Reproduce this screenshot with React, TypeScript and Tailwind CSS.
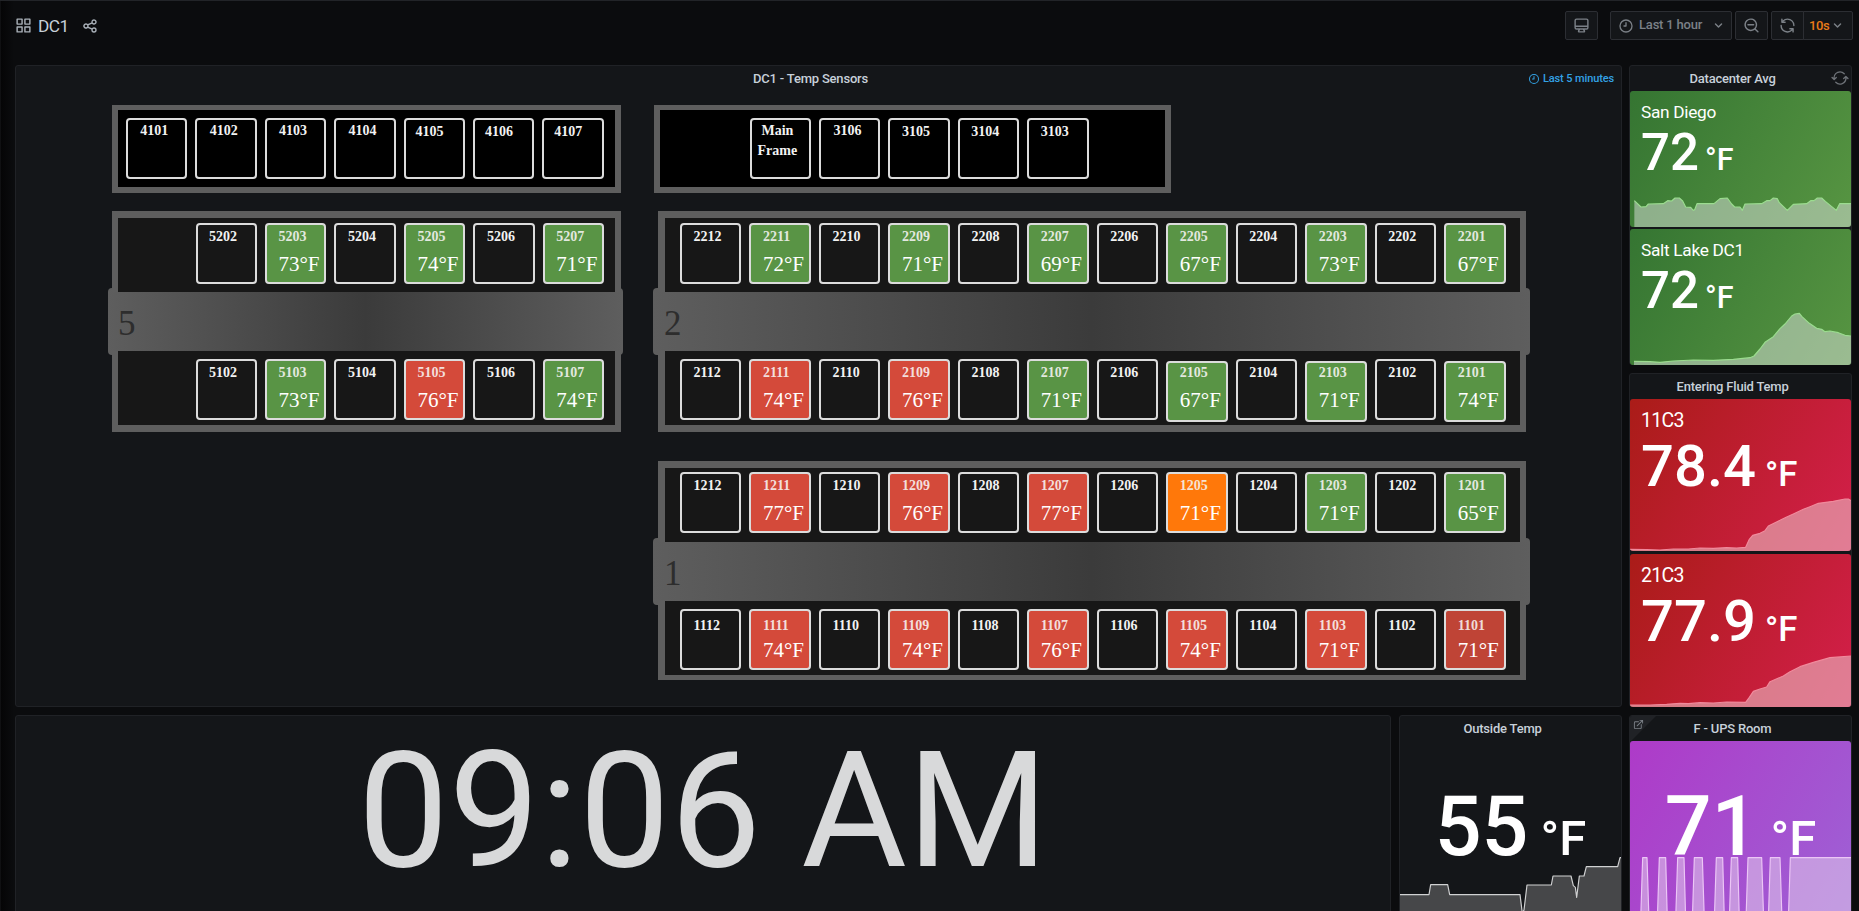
import React from "react";

type Tone = "off" | "green" | "red" | "darkred" | "orange";

interface RackData {
  id: string;
  temp?: string;
  tone?: Tone;
  place?: keyof typeof PLACES;
}

const TONES: Record<Tone, string> = {
  off: "text-[#f2f2f2]",
  green: "bg-[#599445] text-[#e2e8df]",
  red: "bg-[#d44a3a] text-[#f3dedb]",
  darkred: "bg-[#bf4436] text-[#efdbd8]",
  orange: "bg-[#ff780a] text-[#f6e3d2]",
};

const PLACES = {
  normal: "pt-[5px] pl-[11.5px]",
  high: "pt-[4px] pl-[12.3px]",
  left: "pt-[5px] pl-[10px]",
  low: "pt-[8px] pl-[11.5px]",
  nudged: "mt-[2px] pt-[3px] pl-[11.5px]",
};

const ICONS = {
  apps: "M10,13H3a1,1,0,0,0-1,1v7a1,1,0,0,0,1,1h7a1,1,0,0,0,1-1V14A1,1,0,0,0,10,13ZM9,20H4V15H9ZM21,2H14a1,1,0,0,0-1,1v7a1,1,0,0,0,1,1h7a1,1,0,0,0,1-1V3A1,1,0,0,0,21,2ZM20,9H15V4h5Zm1,4H14a1,1,0,0,0-1,1v7a1,1,0,0,0,1,1h7a1,1,0,0,0,1-1V14A1,1,0,0,0,21,13Zm-1,7H15V15h5ZM10,2H3A1,1,0,0,0,2,3v7a1,1,0,0,0,1,1h7a1,1,0,0,0,1-1V3A1,1,0,0,0,10,2ZM9,9H4V4H9Z",
  share: "M18,14a4,4,0,0,0-3.08,1.48l-5.1-2.35a3.64,3.64,0,0,0,0-2.26l5.1-2.35A4,4,0,1,0,14,6a4.17,4.17,0,0,0,.07.71L8.79,9.14a4,4,0,1,0,0,5.72l5.28,2.43A4.17,4.17,0,0,0,14,18a4,4,0,1,0,4-4ZM18,4a2,2,0,1,1-2,2A2,2,0,0,1,18,4ZM6,14a2,2,0,1,1,2-2A2,2,0,0,1,6,14Zm12,6a2,2,0,1,1,2-2A2,2,0,0,1,18,20Z",
  monitor: "M19,2H5A3,3,0,0,0,2,5V15a3,3,0,0,0,3,3H7.64l-.58,1a2,2,0,0,0,0,2,2,2,0,0,0,1.75,1h6.46A2,2,0,0,0,17,21a2,2,0,0,0,0-2l-.59-1H19a3,3,0,0,0,3-3V5A3,3,0,0,0,19,2ZM8.77,20,10,18H14l1.2,2ZM20,15a1,1,0,0,1-1,1H5a1,1,0,0,1-1-1V14H20Zm0-3H4V5A1,1,0,0,1,5,4H19a1,1,0,0,1,1,1Z",
  clock: "M12,2A10,10,0,1,0,22,12,10,10,0,0,0,12,2Zm0,18a8,8,0,1,1,8-8A8,8,0,0,1,12,20ZM12,6a1,1,0,0,0-1,1v4H9a1,1,0,0,0,0,2h3a1,1,0,0,0,1-1V7A1,1,0,0,0,12,6Z",
  zoomOut: "M21.71,20.29,18,16.61A9,9,0,1,0,16.61,18l3.68,3.68a1,1,0,0,0,1.42,0A1,1,0,0,0,21.71,20.29ZM11,18a7,7,0,1,1,7-7A7,7,0,0,1,11,18Zm4-8H7a1,1,0,0,0,0,2h8a1,1,0,0,0,0-2Z",
  sync: "M19.91,15.51H15.38a1,1,0,0,0,0,2h2.4A8,8,0,0,1,4,12a1,1,0,0,0-2,0,10,10,0,0,0,16.88,7.23V21a1,1,0,0,0,2,0V16.5A1,1,0,0,0,19.91,15.51ZM12,2A10,10,0,0,0,5.12,4.77V3a1,1,0,0,0-2,0V7.5a1,1,0,0,0,1,1h4.5a1,1,0,0,0,0-2H6.22A8,8,0,0,1,20,12a1,1,0,0,0,2,0A10,10,0,0,0,12,2Z",
  angle: "M17,9.17a1,1,0,0,0-1.41,0L12,12.71,8.46,9.17a1,1,0,0,0-1.41,0,1,1,0,0,0,0,1.42l4.24,4.24a1,1,0,0,0,1.42,0L17,10.59A1,1,0,0,0,17,9.17Z",
  external: "M18,10.82a1,1,0,0,0-1,1V19a1,1,0,0,1-1,1H5a1,1,0,0,1-1-1V8A1,1,0,0,1,5,7h7.18a1,1,0,0,0,0-2H5A3,3,0,0,0,2,8V19a3,3,0,0,0,3,3H16a3,3,0,0,0,3-3V11.82A1,1,0,0,0,18,10.82Zm3.92-8.2a1,1,0,0,0-.54-.54A1,1,0,0,0,21,2H15a1,1,0,0,0,0,2h3.59L8.29,14.29a1,1,0,0,0,0,1.42,1,1,0,0,0,1.42,0L20,5.41V9a1,1,0,0,0,2,0V3A1,1,0,0,0,21.92,2.62Z",
};

function Icon({ name, className }: { name: keyof typeof ICONS; className: string }) {
  return (
    <svg viewBox="0 0 24 24" fill="currentColor" className={`shrink-0 ${className}`}>
      <path d={ICONS[name]} />
    </svg>
  );
}

function Rack({ id, temp, tone = "off", place = "normal" }: RackData) {
  return (
    <div
      className={`h-[61px] w-[61.4px] shrink-0 rounded-[4px] border-2 border-[#dcdcdc] ${PLACES[place]} ${TONES[tone]}`}
    >
      <div className="text-[14px] leading-[14px] font-bold">{id}</div>
      {temp && (
        <div className={`text-[21px] leading-[21px] whitespace-nowrap text-white ${place === "low" ? "mt-[7px]" : "mt-[10px]"}`}>
          {temp}°F
        </div>
      )}
    </div>
  );
}

const rack = (id: string, temp?: string, tone?: Tone, place?: RackData["place"]): RackData => ({ id, temp, tone, place });

const ROOM4 = [
  rack("4101", undefined, "off", "high"), rack("4102", undefined, "off", "high"),
  rack("4103", undefined, "off", "high"), rack("4104", undefined, "off", "high"),
  rack("4105", undefined, "off", "left"), rack("4106", undefined, "off", "left"),
  rack("4107", undefined, "off", "left"),
];
const ROOM3 = [rack("3106", undefined, "off", "high"), rack("3105"), rack("3104"), rack("3103")];

const ROOM5_TOP = [rack("5202"), rack("5203", "73", "green"), rack("5204"), rack("5205", "74", "green"), rack("5206"), rack("5207", "71", "green")];
const ROOM5_BOTTOM = [rack("5102"), rack("5103", "73", "green"), rack("5104"), rack("5105", "76", "red"), rack("5106"), rack("5107", "74", "green")];
const ROOM2_TOP = [
  rack("2212"), rack("2211", "72", "green"), rack("2210"), rack("2209", "71", "green"),
  rack("2208"), rack("2207", "69", "green"), rack("2206"), rack("2205", "67", "green"),
  rack("2204"), rack("2203", "73", "green"), rack("2202"), rack("2201", "67", "green"),
];
const ROOM2_BOTTOM = [
  rack("2112"), rack("2111", "74", "red"), rack("2110"), rack("2109", "76", "red"),
  rack("2108"), rack("2107", "71", "green"), rack("2106"), rack("2105", "67", "green", "nudged"),
  rack("2104"), rack("2103", "71", "green", "nudged"), rack("2102"), rack("2101", "74", "green", "nudged"),
];
const ROOM1_TOP = [
  rack("1212"), rack("1211", "77", "red"), rack("1210"), rack("1209", "76", "red"),
  rack("1208"), rack("1207", "77", "red"), rack("1206"), rack("1205", "71", "orange"),
  rack("1204"), rack("1203", "71", "green"), rack("1202"), rack("1201", "65", "green"),
];
const ROOM1_BOTTOM: RackData[] = [
  rack("1112"), rack("1111", "74", "red"), rack("1110"), rack("1109", "74", "red"),
  rack("1108"), rack("1107", "76", "red"), rack("1106"), rack("1105", "74", "red"),
  rack("1104"), rack("1103", "71", "red"), rack("1102"), rack("1101", "71", "darkred"),
].map((r) => ({ ...r, place: "low" as const }));

function Room({
  number, top, bottom, className, wing, topWing, bottomWing, bar,
}: {
  number: string;
  top: RackData[];
  bottom: RackData[];
  className: string;
  wing: string;
  topWing: string;
  bottomWing: string;
  bar: string;
}) {
  return (
    <section className={`flex flex-col ${className}`}>
      <div className={`relative z-10 flex items-start gap-[8.08px] border-[#5e5e5e] bg-[#171717] ${wing} ${topWing}`}>
        {top.map((r) => <Rack key={r.id} {...r} />)}
      </div>
      <div className={`-my-[4px] h-[67px] rounded-[4px] bg-[linear-gradient(90deg,#5e5e5e,#3b3b3b_50%,#5e5e5e)] pt-[18px] text-[35px] leading-[35px] text-[#2d2d2d] ${bar}`}>
        {number}
      </div>
      <div className={`relative z-10 flex items-start gap-[8.08px] border-[#5e5e5e] bg-[#171717] ${wing} ${bottomWing}`}>
        {bottom.map((r) => <Rack key={r.id} {...r} />)}
      </div>
    </section>
  );
}

function PanelTitle({ children }: { children: React.ReactNode }) {
  return (
    <h2 className="pt-[5px] pr-[16px] text-center text-[13px] leading-[16px] font-medium tracking-[-0.2px] text-[#c7d0d9]">
      {children}
    </h2>
  );
}

function Chart({ viewBox, points, floor, fill, stroke, className }: {
  viewBox: string;
  points: string;
  floor: number;
  fill: string;
  stroke: string;
  className: string;
}) {
  const list = points.split(" ");
  const first = list[0].split(",")[0];
  const last = list[list.length - 1].split(",")[0];
  return (
    <svg viewBox={viewBox} preserveAspectRatio="none" className={`absolute inset-x-0 top-0 w-full ${className}`}>
      <polygon points={`${first},${floor} ${points} ${last},${floor}`} fill={fill} />
      <polyline points={points} fill="none" stroke={stroke} strokeWidth="3.5" strokeLinejoin="round" />
    </svg>
  );
}

function Stat({ label, value, size, className, chart }: {
  label: string;
  value: string;
  size: "sm" | "lg";
  className: string;
  chart: React.ReactNode;
}) {
  const sm = size === "sm";
  return (
    <div className={`relative overflow-hidden rounded-[3px] pl-[11px] text-white ${className}`}>
      {chart}
      <div
        className={
          sm
            ? "relative pt-[12px] text-[17.3px] leading-[18px] tracking-[-0.3px]"
            : "relative pt-[12px] text-[19.5px] leading-[20px] tracking-[-0.7px]"
        }
      >
        {label}
      </div>
      <div className={`relative flex items-baseline font-medium whitespace-nowrap ${sm ? "mt-[6px] text-[51px] leading-[51px]" : "mt-[6px] text-[58px] leading-[58px]"}`}>
        <span>{value}</span>
        <span className={sm ? "ml-[6px] text-[30.5px]" : "ml-[9px] text-[34.8px]"}>°F</span>
      </div>
    </div>
  );
}

const AVG_SD = "283,602 303,621 318,620 325,612 370,611 383,602 395,603 405,594 418,594 428,603 437,621 452,622 460,631 464,629 471,611 522,611 540,596 562,594 575,612 584,621 600,621 607,631 615,612 665,611 680,602 690,602 700,594 712,596 718,608 742,631 760,613 800,611 812,602 822,602 832,594 845,594 856,604 889,631 899,611 933,611";
const AVG_SL = "102,424 150,425 180,427 220,423 280,420 340,421 400,418 450,413 462,408 480,387 495,367 520,350 540,326 555,312 575,288 585,282 598,280 606,290 628,310 650,325 665,328 675,335 690,333 715,338 735,346 753,348";
const FLUID_11 = "90,328 140,329 180,330 220,327 265,327 300,324 340,325 380,323 410,324 437,322 448,298 458,286 480,280 495,272 505,258 525,248 540,241 560,231 580,222 610,208 630,200 655,190 700,184 735,177 745,177 753,182";
const FLUID_21 = "90,795 150,795 200,793 240,790 265,791 300,788 340,789 380,786 437,787 448,772 460,754 480,747 500,741 510,725 550,708 570,695 600,680 640,667 690,653 753,648";
const OUTSIDE = "60,584 147,584 152,554 203,554 209,584 420,584 427,640 432,630 441,555 514,555 519,528 573,528 580,557 586,562 590,592 598,528 612,528 619,500 713,500 720,473 723,473";
const UPS = "750,660 782,660 788,473 801,473 807,660 832,660 838,473 857,473 862,660 887,660 893,473 912,473 917,660 937,660 943,473 967,473 973,660 1003,660 1009,473 1028,473 1033,660 1048,660 1054,473 1073,473 1078,660 1098,660 1104,473 1145,473 1151,660 1165,660 1171,473 1200,473 1206,660 1225,660 1231,473 1413,473";

export default function App() {
  return (
    <div className="flex h-[911px] w-[1859px] flex-col overflow-hidden border-t border-[#222428] bg-[linear-gradient(90deg,#1a1b1e_0px,#050506_1px,#0b0c0e_14px)] font-['Roboto',sans-serif]">
      <header className="flex h-[64px] shrink-0 items-start pt-[10px] pr-[6px] pl-[15px]">
        <div className="flex h-[29px] items-center text-[#a9b0b8]">
          <Icon name="apps" className="h-[17px] w-[17px]" />
          <h1 className="ml-[6px] w-[30px] text-[17.3px] leading-[20px] tracking-[-0.5px] text-[#c7d0d9]">DC1</h1>
          <Icon name="share" className="ml-[14px] h-[16px] w-[16px]" />
        </div>
        <div className="ml-auto flex h-[29px] text-[13px] font-medium tracking-[-0.2px] text-[#7b8087]">
          <button className="mr-[12px] flex w-[33px] items-center justify-center rounded-[2px] border border-[#2c2e33] bg-[#141619]">
            <Icon name="monitor" className="h-[17px] w-[17px]" />
          </button>
          <button className="mr-[3px] flex w-[122px] items-center rounded-[2px] border border-[#2c2e33] bg-[#141619] pl-[7px]">
            <Icon name="clock" className="h-[16px] w-[16px]" />
            <span className="ml-[5px] pb-[2px] leading-[16px] whitespace-nowrap">Last 1 hour</span>
            <Icon name="angle" className="mr-[4px] ml-auto h-[17px] w-[17px]" />
          </button>
          <button className="mr-[3px] flex w-[33px] items-center justify-center rounded-[2px] border border-[#2c2e33] bg-[#141619]">
            <Icon name="zoomOut" className="h-[17px] w-[17px]" />
          </button>
          <button className="flex w-[33px] items-center justify-center rounded-l-[2px] border border-[#2c2e33] bg-[#141619]">
            <Icon name="sync" className="h-[17px] w-[17px]" />
          </button>
          <button className="-ml-px flex w-[50px] items-center rounded-r-[2px] border border-[#2c2e33] bg-[#141619] pl-[5px]">
            <span className="w-[20px] leading-[16px] tracking-[-0.4px] text-[#eb7b18]">10s</span>
            <Icon name="angle" className="h-[17px] w-[17px]" />
          </button>
        </div>
      </header>

      <main className="flex gap-[7px] pl-[15px]">
        <div className="flex w-[1607px] flex-col gap-[8px]">
          <section className="relative flex h-[642px] flex-col rounded-[3px] border border-[#202226] bg-[#141619]">
            <PanelTitle>DC1 - Temp Sensors</PanelTitle>
            <div className="absolute top-[5px] right-[7px] flex items-center gap-[3px] text-[11px] leading-[16px] font-medium tracking-[-0.12px] text-[#33a2e5]">
              <Icon name="clock" className="h-[12px] w-[12px]" />
              <span>Last 5 minutes</span>
            </div>
            <div className="flex flex-col pt-[18px] pl-[96px] font-['Liberation_Serif',serif]">
              <div className="flex gap-[33px]">
                <section className="flex h-[88px] w-[509px] items-start gap-[8px] border-x-[6px] border-t-[5px] border-b-[6px] border-[#5e5e5e] bg-black pt-[8px] pl-[8px]">
                  {ROOM4.map((r) => <Rack key={r.id} {...r} />)}
                </section>
                <section className="flex h-[88px] w-[517px] items-start gap-[8px] border-x-[6px] border-t-[5px] border-b-[6px] border-[#5e5e5e] bg-black pt-[8px] pl-[89.7px]">
                  <div className="h-[61px] w-[61.4px] shrink-0 rounded-[4px] border-2 border-[#dcdcdc] pt-px pr-[6px] text-center text-[14px] leading-[20px] font-bold text-[#f2f2f2]">
                    Main Frame
                  </div>
                  {ROOM3.map((r) => <Rack key={r.id} {...r} />)}
                </section>
              </div>
              <div className="mt-[18px] flex gap-[37px]">
                <Room
                  number="5" top={ROOM5_TOP} bottom={ROOM5_BOTTOM} className="w-[509px]"
                  wing="border-x-[6px] pl-[77.5px]"
                  topWing="h-[81px] border-t-[7px] pt-[5px]"
                  bottomWing="h-[81px] border-b-[7px] pt-[8px]"
                  bar="-mr-[2px] -ml-[4px] pl-[10px]"
                />
                <Room
                  number="2" top={ROOM2_TOP} bottom={ROOM2_BOTTOM} className="w-[868px]"
                  wing="border-r-[6px] border-l-[7px] pl-[15px]"
                  topWing="h-[81px] border-t-[7px] pt-[5px]"
                  bottomWing="h-[81px] border-b-[7px] pt-[8px]"
                  bar="-mr-[4px] -ml-[5px] pl-[11px]"
                />
              </div>
              <div className="mt-[29px] flex pl-[546px]">
                <Room
                  number="1" top={ROOM1_TOP} bottom={ROOM1_BOTTOM} className="w-[868px]"
                  wing="border-r-[6px] border-l-[7px] pl-[15px]"
                  topWing="h-[81px] border-t-[7px] pt-[4px]"
                  bottomWing="h-[79px] border-b-[5px] pt-[8px]"
                  bar="-mr-[4px] -ml-[5px] pl-[11px]"
                />
              </div>
            </div>
          </section>

          <div className="flex gap-[8px]">
            <section className="flex h-[240px] w-[1376px] justify-center rounded-[3px] border border-[#202226] bg-[#141619] pt-[14px] text-[162px] leading-[162px] text-[#d8d9da]">
              09:06 AM
            </section>
            <section className="relative h-[240px] w-[223px] overflow-hidden rounded-[3px] border border-[#202226] bg-[#141619]">
              <PanelTitle>Outside Temp</PanelTitle>
              <div className="relative mt-[4px] h-[200px]">
                <Chart viewBox="60 123 663 510" points={OUTSIDE} floor={640} fill="#464749" stroke="#d0d1d2" className="h-[170px]" />
                <div className="relative flex items-baseline justify-center pt-[44px] text-[82.5px] leading-[83px] font-medium whitespace-nowrap text-white">
                  <span>55</span>
                  <span className="ml-[12px] text-[49px]">°F</span>
                </div>
              </div>
            </section>
          </div>
        </div>

        <div className="flex w-[223px] flex-col gap-[8px]">
          <section className="relative flex h-[300px] flex-col rounded-[3px] border border-[#202226] bg-[#141619]">
            <PanelTitle>Datacenter Avg</PanelTitle>
            <Icon name="sync" className="absolute top-[4px] right-[3px] h-[16px] w-[16px] -rotate-45 text-[#6e7278]" />
            <div className="mt-[4px] flex flex-col gap-[2px]">
              <Stat
                label="San Diego" value="72" size="sm"
                className="h-[136px] bg-[linear-gradient(120deg,#357532,#579542)]"
                chart={<Chart viewBox="270 273 663 408" points={AVG_SD} floor={681} fill="rgba(222,225,224,0.5)" stroke="#9bdc8f" className="h-[136px]" />}
              />
              <Stat
                label="Salt Lake DC1" value="72" size="sm"
                className="h-[136px] bg-[linear-gradient(120deg,#357532,#579542)]"
                chart={<Chart viewBox="90 27 663 408" points={AVG_SL} floor={435} fill="rgba(222,225,224,0.5)" stroke="#9bdc8f" className="h-[136px]" />}
              />
            </div>
          </section>
          <section className="flex h-[334px] flex-col rounded-[3px] border border-[#202226] bg-[#141619]">
            <PanelTitle>Entering Fluid Temp</PanelTitle>
            <div className="mt-[4px] flex flex-col gap-[3px]">
              <Stat
                label="11C3" value="78.4" size="lg"
                className="h-[152px] bg-[linear-gradient(120deg,#aa1c18,#d41f4b)]"
                chart={<Chart viewBox="90 -123 663 456" points={FLUID_11} floor={333} fill="rgba(240,218,222,0.5)" stroke="#f08a9c" className="h-[152px]" />}
              />
              <Stat
                label="21C3" value="77.9" size="lg"
                className="h-[153px] bg-[linear-gradient(120deg,#aa1c18,#d41f4b)]"
                chart={<Chart viewBox="90 342 663 459" points={FLUID_21} floor={801} fill="rgba(240,218,222,0.5)" stroke="#f08a9c" className="h-[153px]" />}
              />
            </div>
          </section>
          <section className="relative h-[240px] overflow-hidden rounded-[3px] border border-[#202226] bg-[#141619]">
            <div className="absolute top-0 left-0 h-[26px] w-[26px] bg-[#202226] [clip-path:polygon(0_0,100%_0,0_100%)]" />
            <Icon name="external" className="absolute top-[3px] left-[3px] h-[11px] w-[11px] text-[#7b8087]" />
            <PanelTitle>F - UPS Room</PanelTitle>
            <div className="relative mt-[4px] h-[245px] overflow-hidden rounded-[3px] bg-[linear-gradient(120deg,#ae3ac8,#9c66d7)]">
              <Chart viewBox="750 123 663 510" points={UPS} floor={660} fill="rgba(232,215,238,0.5)" stroke="#ecc6f6" className="h-[170px]" />
              <div className="relative flex items-baseline justify-center pt-[44px] text-[82.5px] leading-[83px] font-medium whitespace-nowrap text-white">
                <span>71</span>
                <span className="ml-[12px] text-[49px]">°F</span>
              </div>
            </div>
          </section>
        </div>
      </main>
    </div>
  );
}
